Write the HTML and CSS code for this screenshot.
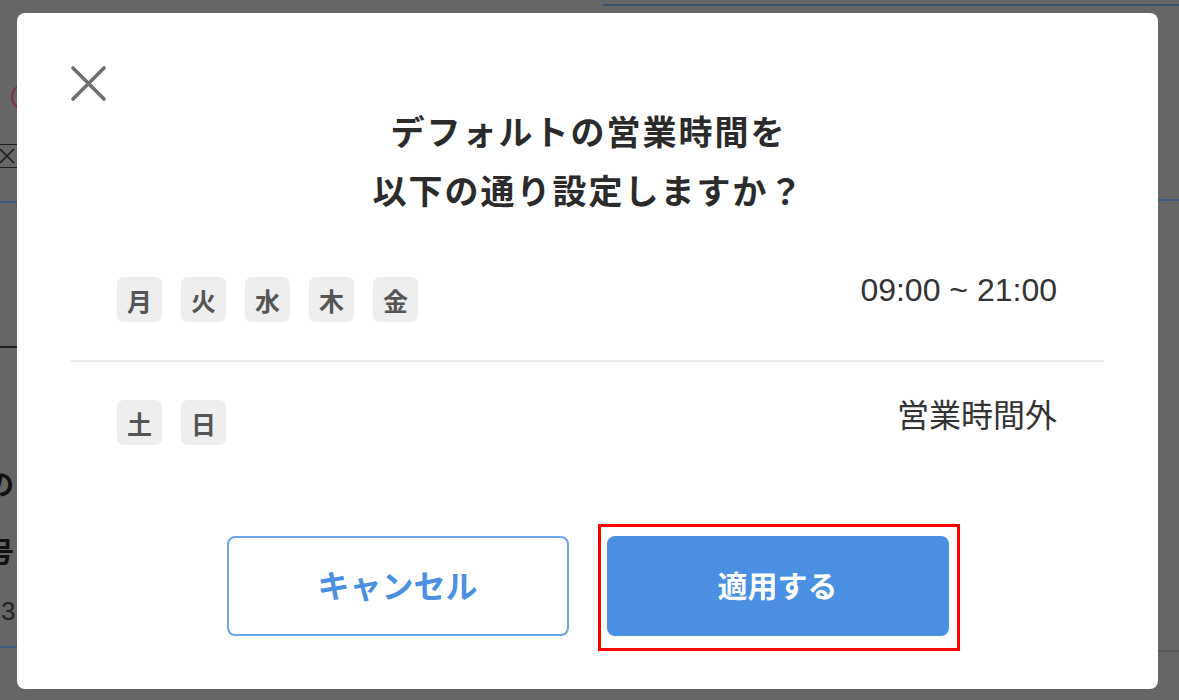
FILE: index.html
```html
<!DOCTYPE html>
<html lang="ja">
<head>
  <meta charset="UTF-8">
  <meta name="viewport" content="width=device-width, initial-scale=1.0">
  <title>営業時間の設定</title>
  <link rel="stylesheet" href="styles.css">
</head>
<body>
  <div class="backdrop">
    <div class="topline"></div>
    <div class="sides">
      <div class="side-left">
        <div class="ring"></div>
        <div class="checkbox">
          <svg width="17" height="22" viewBox="0 0 17 22"><path d="M0 4 L14 18 M14 4 L0 18" stroke="#1e1e1e" stroke-width="1.6" fill="none"/></svg>
        </div>
        <div class="rule rule-blue rule-a"></div>
        <div class="rule rule-dark rule-b"></div>
        <div class="frag frag-no">の</div>
        <div class="frag frag-go">号</div>
        <div class="frag frag-num">3</div>
        <div class="rule rule-blue rule-c"></div>
      </div>
      <div class="side-right">
        <div class="rule rule-blue rule-d"></div>
        <div class="rule rule-grey rule-e"></div>
      </div>
    </div>
  </div>

  <div class="modal">
    <button class="close" aria-label="閉じる">
      <svg width="37" height="37" viewBox="0 0 37 37"><path d="M3 3 L34 34 M34 3 L3 34" stroke="#6e6e6e" stroke-width="3.6" stroke-linecap="round" fill="none"/></svg>
    </button>

    <h2 class="title">デフォルトの営業時間を<br>以下の通り設定しますか？</h2>

    <div class="hours">
      <div class="row">
        <div class="days">
          <span class="day">月</span>
          <span class="day">火</span>
          <span class="day">水</span>
          <span class="day">木</span>
          <span class="day">金</span>
        </div>
        <span class="time time-open">09:00 ~ 21:00</span>
      </div>
      <div class="row">
        <div class="days">
          <span class="day">土</span>
          <span class="day">日</span>
        </div>
        <span class="time">営業時間外</span>
      </div>
    </div>

    <div class="actions">
      <button class="btn btn-cancel">キャンセル</button>
      <button class="btn btn-apply">適用する</button>
    </div>
  </div>
</body>
</html>
```

FILE: styles.css
```css
body {
  margin: 0;
  background: #666;
  font-family: "Liberation Sans", "Noto Sans CJK JP", sans-serif;
  overflow: hidden;
  height: 700px;
}
.topline {
  margin: 4px 0 0 603px;
  height: 2px;
  background: #36506e;
}
.sides {
  display: flex;
  justify-content: space-between;
}
.side-left {
  width: 17px;
  overflow: hidden;
  display: flex;
  flex-direction: column;
}
.side-right {
  width: 21px;
  display: flex;
  flex-direction: column;
}
.ring {
  margin: 78px 0 0 11px;
  width: 22px;
  height: 22px;
  border: 2px solid #8a2a3e;
  border-radius: 50%;
  flex-shrink: 0;
}
.checkbox {
  margin-top: 34px;
  height: 22px;
  border-top: 1px solid #1e1e1e;
  border-bottom: 1px solid #1e1e1e;
}
.checkbox svg {
  display: block;
}
.rule {
  height: 2px;
  flex-shrink: 0;
}
.rule-blue {
  background: #3d5a80;
}
.rule-dark {
  background: #222;
}
.rule-grey {
  background: #585858;
}
.rule-a {
  margin-top: 33px;
}
.rule-b {
  margin-top: 143px;
}
.rule-c {
  margin-top: 20px;
}
.rule-d {
  margin-top: 193px;
}
.rule-e {
  margin-top: 449px;
}
.frag {
  font-family: "Noto Sans CJK JP", sans-serif;
  font-size: 28px;
  line-height: 30px;
  color: #111;
  font-weight: bold;
  margin-left: -14px;
  white-space: nowrap;
}
.frag-no {
  margin-top: 120px;
}
.frag-go {
  margin-top: 38px;
}
.frag-num {
  margin-top: 30px;
  margin-left: 1px;
  font-family: "Liberation Sans", sans-serif;
  font-weight: normal;
  color: #222;
  font-size: 26px;
}

.modal {
  position: fixed;
  top: 13px;
  left: 17px;
  width: 1141px;
  height: 676px;
  box-sizing: border-box;
  padding: 88px 54px 0;
  background: #fff;
  border-radius: 8px;
  color: #333;
}
.close {
  position: absolute;
  top: 52px;
  left: 53px;
  padding: 0;
  border: none;
  background: none;
  cursor: pointer;
}
.close svg {
  display: block;
}
.title {
  margin: 0;
  padding-left: 2px;
  text-align: center;
  font-family: "Noto Sans CJK JP", sans-serif;
  font-size: 34px;
  letter-spacing: 2px;
  line-height: 59px;
  font-weight: bold;
  color: #2b2b2b;
}
.hours {
  margin-top: 20px;
}
.row {
  display: flex;
  justify-content: space-between;
  align-items: flex-start;
  padding: 38px 47px 38px 46px;
}
.row + .row {
  border-top: 2px solid #e8e8e8;
}
.days {
  display: flex;
  gap: 19px;
}
.day {
  width: 45px;
  height: 45px;
  border-radius: 7px;
  background: #eee;
  display: flex;
  align-items: center;
  justify-content: center;
  font-family: "Noto Sans CJK JP", sans-serif;
  font-size: 25px;
  font-weight: bold;
  color: #555;
}
.time {
  font-size: 32px;
  line-height: 32px;
  color: #333;
}
.time-open {
  margin-top: -3px;
}
.actions {
  display: flex;
  justify-content: center;
  gap: 38px;
  margin-top: 53px;
}
.btn {
  width: 342px;
  height: 100px;
  box-sizing: border-box;
  padding: 0 0 5px;
  border-radius: 8px;
  font-family: "Noto Sans CJK JP", sans-serif;
  font-size: 30px;
  font-weight: bold;
  cursor: pointer;
}
.btn-cancel {
  background: #fff;
  border: 2px solid #6aa6ea;
  color: #4a90e2;
  font-size: 32px;
}
.btn-apply {
  position: relative;
  background: #4a90e2;
  border: none;
  color: #fff;
}
.btn-apply::after {
  content: "";
  position: absolute;
  top: -12px;
  right: -11px;
  bottom: -15px;
  left: -9px;
  border: 3px solid #f00;
}
```
